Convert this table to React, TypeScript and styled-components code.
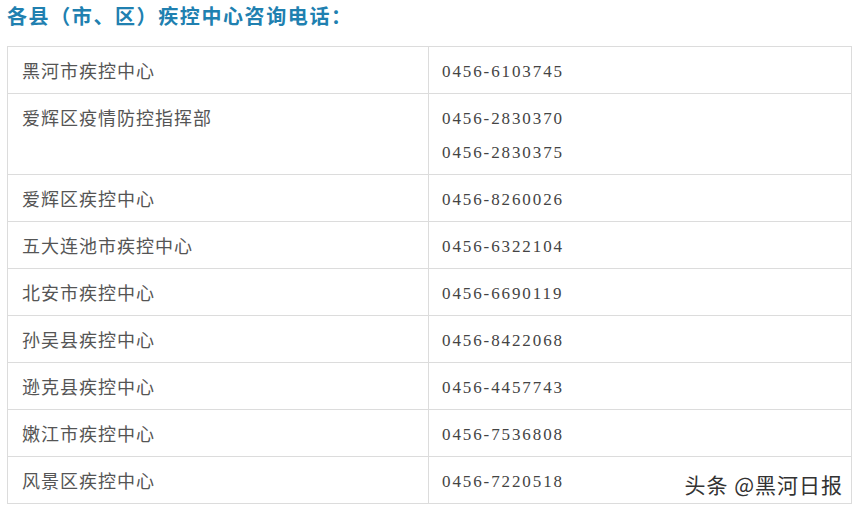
import React, { ReactElement } from 'react';
import styled, { createGlobalStyle } from 'styled-components';

interface ICenter {
  name: string;
  phones: string[];
}

const centers: ICenter[] = [
  { name: '黑河市疾控中心', phones: ['0456-6103745'] },
  { name: '爱辉区疫情防控指挥部', phones: ['0456-2830370', '0456-2830375'] },
  { name: '爱辉区疾控中心', phones: ['0456-8260026'] },
  { name: '五大连池市疾控中心', phones: ['0456-6322104'] },
  { name: '北安市疾控中心', phones: ['0456-6690119'] },
  { name: '孙吴县疾控中心', phones: ['0456-8422068'] },
  { name: '逊克县疾控中心', phones: ['0456-4457743'] },
  { name: '嫩江市疾控中心', phones: ['0456-7536808'] },
  { name: '风景区疾控中心', phones: ['0456-7220518'] },
];

const App: React.FC = (): ReactElement => (
  <>
    <GlobalStyle />
    <Page>
      <Title>各县（市、区）疾控中心咨询电话：</Title>
      <Table>
        <tbody>
          {centers.map(({ name, phones }) => (
            <tr key={name}>
              <NameCell>{name}</NameCell>
              <PhoneCell>
                {phones.map((p) => (
                  <Phone key={p}>{p}</Phone>
                ))}
              </PhoneCell>
            </tr>
          ))}
        </tbody>
      </Table>
      <Watermark>头条 @黑河日报</Watermark>
    </Page>
  </>
);
export default App;

const GlobalStyle = createGlobalStyle`
  body {
    margin: 0;
    background: #ffffff;
  }
`;

const Page = styled.div`
  position: relative;
  width: 857px;
  height: 512px;
  padding: 0 0 0 7px;
  box-sizing: border-box;
  overflow: hidden;
`;

const Title = styled.h2`
  margin: 0;
  padding-top: 2px;
  height: 44px;
  font-family: "Noto Sans CJK SC", sans-serif;
  font-size: 20px;
  font-weight: bold;
  line-height: 28px;
  letter-spacing: 1.6px;
  color: #2080b0;
`;

const Table = styled.table`
  width: 845px;
  border-collapse: collapse;
  table-layout: fixed;
`;

const Cell = styled.td`
  border: 1px solid #dcdcdc;
  padding: 6px 14px;
  vertical-align: top;
  line-height: 34px;
  color: #555555;
`;

const NameCell = styled(Cell)`
  width: 392px;
  font-family: "Noto Sans CJK SC", sans-serif;
  font-size: 18px;
  letter-spacing: 1px;
`;

const PhoneCell = styled(Cell)`
  padding: 8px 14px 4px 13px;
  font-family: "Liberation Serif", serif;
  font-size: 17px;
  letter-spacing: 1.9px;
  color: #444444;
`;

const Phone = styled.div`
  height: 34px;
`;

const Watermark = styled.div`
  position: absolute;
  right: 14px;
  bottom: 15px;
  font-family: "Noto Sans CJK SC", sans-serif;
  font-size: 21px;
  line-height: 26px;
  letter-spacing: 1px;
  color: #333333;
  text-shadow: 1px 1px 0 #ffffff, -1px -1px 0 #ffffff;
`;
